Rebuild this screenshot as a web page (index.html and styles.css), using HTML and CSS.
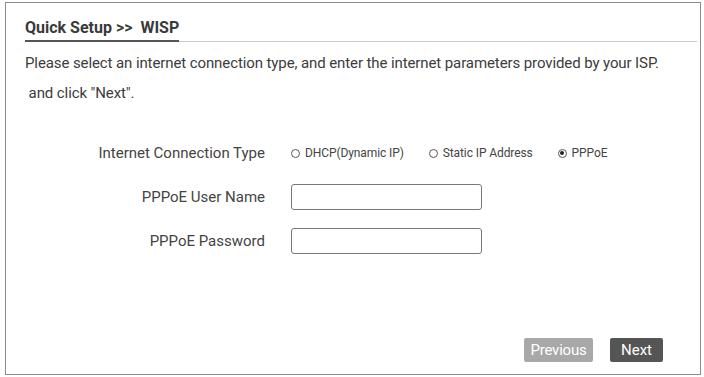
FILE: index.html
```html
<!DOCTYPE html>
<html lang="en">
<head>
    <meta charset="UTF-8">
    <meta name="viewport" content="width=device-width, initial-scale=1.0">
    <title>Quick Setup - WISP</title>
    <link rel="stylesheet" href="styles.css">
</head>
<body>
    <div class="panel">
        <div class="panel-head">
            <h2>Quick Setup &gt;&gt;&nbsp; WISP</h2>
        </div>
        <p class="intro">Please select an internet connection type, and enter the internet parameters provided by your ISP.<br>&nbsp;and click "Next".</p>

        <div class="form">
            <div class="form-row">
                <label class="form-label">Internet Connection Type</label>
                <div class="radios">
                    <label class="radio"><span class="dot"></span>DHCP(Dynamic IP)</label>
                    <label class="radio"><span class="dot"></span>Static IP Address</label>
                    <label class="radio"><span class="dot checked"></span>PPPoE</label>
                </div>
            </div>
            <div class="form-row">
                <label class="form-label" for="pppoeUser">PPPoE User Name</label>
                <input type="text" id="pppoeUser">
            </div>
            <div class="form-row">
                <label class="form-label" for="pppoePass">PPPoE Password</label>
                <input type="password" id="pppoePass">
            </div>
        </div>

        <div class="actions">
            <button type="button" class="btn btn-prev">Previous</button>
            <button type="button" class="btn btn-next">Next</button>
        </div>
    </div>
</body>
</html>
```

FILE: styles.css
```css
body {
    margin: 0;
    padding: 0;
    font-family: Roboto, "Liberation Sans", Arial, sans-serif;
    color: #3c3c3c;
    background: #fff;
}

.panel {
    margin: 2px 3px 0 5px;
    width: 696px;
    height: 373px;
    border: 1px solid #8c8c8c;
    box-sizing: border-box;
    padding: 0 3px 0 19px;
    display: flex;
    flex-direction: column;
}

.panel-head {
    border-bottom: 1px solid #ccc;
    height: 38px;
    display: flex;
    align-items: flex-end;
}

.panel-head h2 {
    margin: 0 0 -1px;
    font-size: 16px;
    font-weight: bold;
    color: #3a3a3a;
    padding-bottom: 3px;
    border-bottom: 2px solid #555;
}

.intro {
    margin: 6px 0 0;
    font-size: 15px;
    letter-spacing: -0.1px;
    line-height: 30px;
}

.form {
    margin-top: 32px;
    display: flex;
    flex-direction: column;
    gap: 18px;
}

.form-row {
    display: grid;
    grid-template-columns: 240px auto;
    column-gap: 26px;
    align-items: center;
    min-height: 26px;
}

.form-label {
    text-align: right;
    font-size: 15px;
    color: #444;
}

.radios {
    display: flex;
    gap: 25px;
    font-size: 12px;
    letter-spacing: -0.1px;
    color: #444;
}

.radio {
    display: flex;
    align-items: center;
    gap: 5px;
}

.dot {
    width: 9px;
    height: 9px;
    border: 1px solid #555;
    border-radius: 50%;
    box-sizing: border-box;
    position: relative;
}

.dot.checked::after {
    content: "";
    position: absolute;
    left: 1.5px;
    top: 1.5px;
    width: 4px;
    height: 4px;
    border-radius: 50%;
    background: #222;
}

input {
    width: 191px;
    height: 26px;
    border: 1px solid #777;
    border-radius: 3px;
    box-sizing: border-box;
    padding: 0 6px;
    font-size: 14px;
}

input:focus {
    outline: none;
    border-color: #444;
}

.actions {
    margin-top: auto;
    margin-bottom: 12px;
    display: flex;
    justify-content: flex-end;
    gap: 17px;
    padding-right: 34px;
}

.btn {
    height: 24px;
    padding: 0;
    border: none;
    border-radius: 2px;
    color: #fff;
    font-family: inherit;
    font-size: 15px;
    cursor: pointer;
}

.btn-prev {
    width: 69px;
    background: #a8a8a8;
    letter-spacing: -0.2px;
}

.btn-next {
    width: 53px;
    background: #555;
}
```
